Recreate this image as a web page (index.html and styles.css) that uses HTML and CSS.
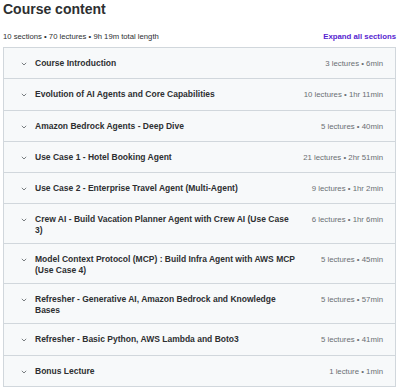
FILE: index.html
```html
<!DOCTYPE html>
<html lang="en">
<head>
    <meta charset="UTF-8">
    <meta name="viewport" content="width=device-width, initial-scale=1.0">
    <title>Course content</title>
    <link rel="stylesheet" href="styles.css">
</head>
<body>
    <div class="container">
        <h2>Course content</h2>
        <div class="summary">
            <span>10 sections • 70 lectures • 9h 19m total length</span>
            <button class="expand-btn">Expand all sections</button>
        </div>
        <div class="sections">
            <div class="section">
                <span class="chevron"><svg width="6" height="4" viewBox="0 0 6 4"><path d="M0.8 0.8 L3 3 L5.2 0.8" fill="none" stroke="#6a6f73" stroke-width="0.9"/></svg></span>
                <span class="title">Course Introduction</span>
                <span class="meta">3 lectures • 6min</span>
            </div>
            <div class="section">
                <span class="chevron"><svg width="6" height="4" viewBox="0 0 6 4"><path d="M0.8 0.8 L3 3 L5.2 0.8" fill="none" stroke="#6a6f73" stroke-width="0.9"/></svg></span>
                <span class="title">Evolution of AI Agents and Core Capabilities</span>
                <span class="meta">10 lectures • 1hr 11min</span>
            </div>
            <div class="section">
                <span class="chevron"><svg width="6" height="4" viewBox="0 0 6 4"><path d="M0.8 0.8 L3 3 L5.2 0.8" fill="none" stroke="#6a6f73" stroke-width="0.9"/></svg></span>
                <span class="title">Amazon Bedrock Agents - Deep Dive</span>
                <span class="meta">5 lectures • 40min</span>
            </div>
            <div class="section">
                <span class="chevron"><svg width="6" height="4" viewBox="0 0 6 4"><path d="M0.8 0.8 L3 3 L5.2 0.8" fill="none" stroke="#6a6f73" stroke-width="0.9"/></svg></span>
                <span class="title">Use Case 1 - Hotel Booking Agent</span>
                <span class="meta">21 lectures • 2hr 51min</span>
            </div>
            <div class="section">
                <span class="chevron"><svg width="6" height="4" viewBox="0 0 6 4"><path d="M0.8 0.8 L3 3 L5.2 0.8" fill="none" stroke="#6a6f73" stroke-width="0.9"/></svg></span>
                <span class="title">Use Case 2 - Enterprise Travel Agent (Multi-Agent)</span>
                <span class="meta">9 lectures • 1hr 2min</span>
            </div>
            <div class="section">
                <span class="chevron"><svg width="6" height="4" viewBox="0 0 6 4"><path d="M0.8 0.8 L3 3 L5.2 0.8" fill="none" stroke="#6a6f73" stroke-width="0.9"/></svg></span>
                <span class="title">Crew AI - Build Vacation Planner Agent with Crew AI (Use Case 3)</span>
                <span class="meta">6 lectures • 1hr 6min</span>
            </div>
            <div class="section">
                <span class="chevron"><svg width="6" height="4" viewBox="0 0 6 4"><path d="M0.8 0.8 L3 3 L5.2 0.8" fill="none" stroke="#6a6f73" stroke-width="0.9"/></svg></span>
                <span class="title">Model Context Protocol (MCP) : Build Infra Agent with AWS MCP (Use Case 4)</span>
                <span class="meta">5 lectures • 45min</span>
            </div>
            <div class="section">
                <span class="chevron"><svg width="6" height="4" viewBox="0 0 6 4"><path d="M0.8 0.8 L3 3 L5.2 0.8" fill="none" stroke="#6a6f73" stroke-width="0.9"/></svg></span>
                <span class="title">Refresher - Generative AI, Amazon Bedrock and Knowledge Bases</span>
                <span class="meta">5 lectures • 57min</span>
            </div>
            <div class="section">
                <span class="chevron"><svg width="6" height="4" viewBox="0 0 6 4"><path d="M0.8 0.8 L3 3 L5.2 0.8" fill="none" stroke="#6a6f73" stroke-width="0.9"/></svg></span>
                <span class="title">Refresher - Basic Python, AWS Lambda and Boto3</span>
                <span class="meta">5 lectures • 41min</span>
            </div>
            <div class="section">
                <span class="chevron"><svg width="6" height="4" viewBox="0 0 6 4"><path d="M0.8 0.8 L3 3 L5.2 0.8" fill="none" stroke="#6a6f73" stroke-width="0.9"/></svg></span>
                <span class="title">Bonus Lecture</span>
                <span class="meta">1 lecture • 1min</span>
            </div>
        </div>
    </div>
</body>
</html>
```

FILE: styles.css
```css
body {
    font-family: "Liberation Sans", Arial, sans-serif;
    background-color: #fff;
    color: #2d2f31;
    margin: 0;
    padding: 0;
}

.container {
    width: 393px;
    margin-left: 3px;
}

h2 {
    font-size: 14px;
    font-weight: bold;
    margin: 0 0 8px;
    line-height: 18px;
}

.summary {
    display: flex;
    justify-content: space-between;
    align-items: center;
    font-size: 7.7px;
    color: #2d2f31;
    height: 21px;
}

.expand-btn {
    background: none;
    border: none;
    padding: 0;
    font-family: inherit;
    font-size: 7.8px;
    font-weight: bold;
    color: #5624d0;
    cursor: pointer;
}

.sections {
    border: 1px solid #d1d7dc;
    border-bottom: none;
}

.section {
    box-sizing: border-box;
    min-height: 31.3px;
    display: flex;
    align-items: flex-start;
    background-color: #f7f9fa;
    border-bottom: 1px solid #d1d7dc;
    padding: 10px 12px 7px 17px;
    line-height: 11px;
}

.chevron {
    width: 14px;
    flex-shrink: 0;
    padding-top: 4px;
}

.chevron svg {
    display: block;
}

.title {
    width: 263px;
    flex-shrink: 0;
    font-size: 8.5px;
    font-weight: bold;
}

.meta {
    margin-left: auto;
    font-size: 7.8px;
    color: #6a6f73;
    white-space: nowrap;
}
```
